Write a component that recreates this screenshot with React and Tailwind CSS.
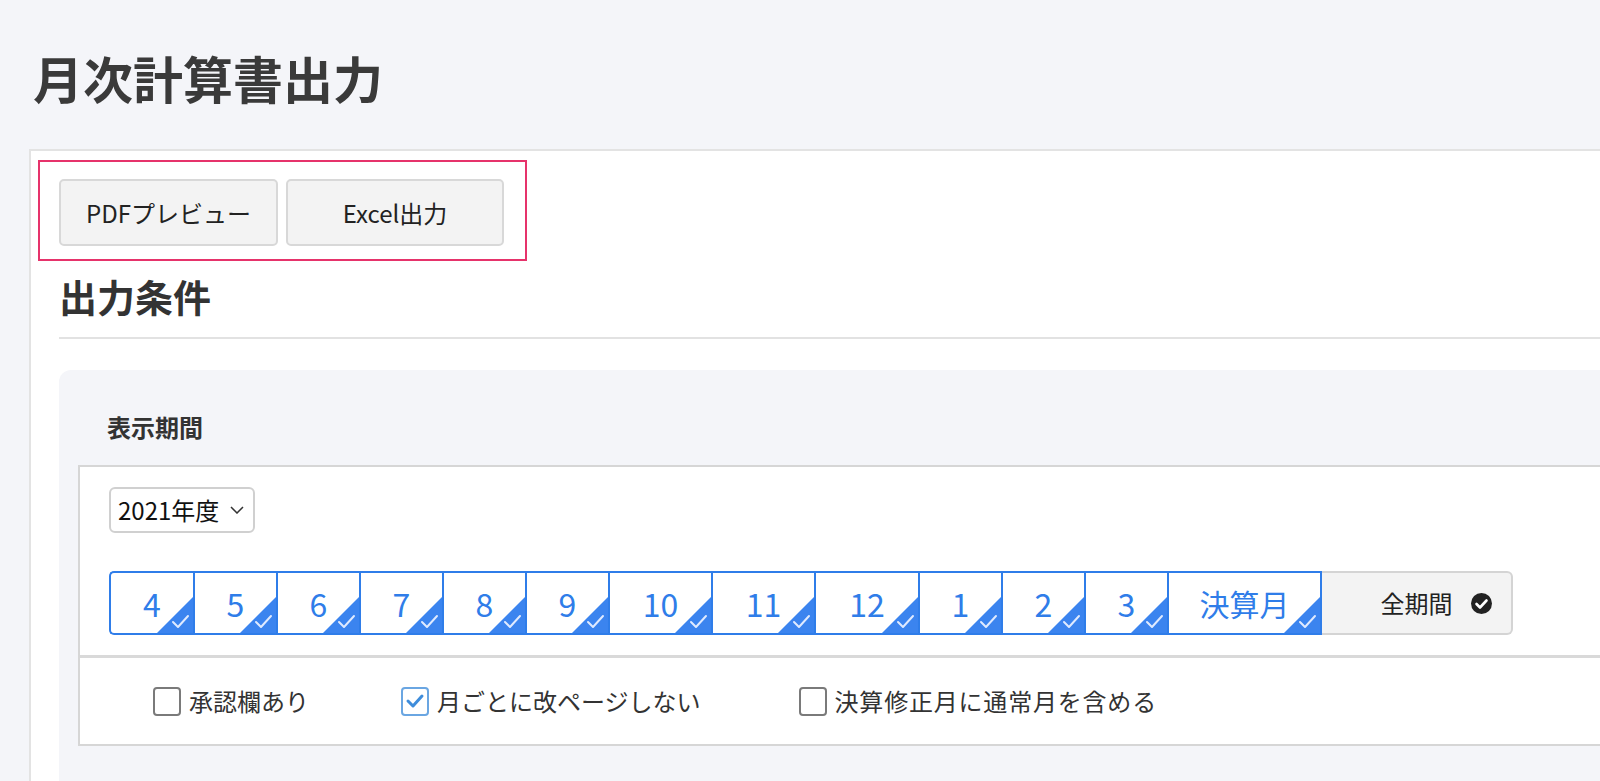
import React from "react";

const months = [
  { label: "4", w: "w-[84px]" },
  { label: "5", w: "w-[83px]" },
  { label: "6", w: "w-[83px]" },
  { label: "7", w: "w-[83px]" },
  { label: "8", w: "w-[83px]" },
  { label: "9", w: "w-[83px]" },
  { label: "10", w: "w-[103px]" },
  { label: "11", w: "w-[103px]" },
  { label: "12", w: "w-[104px]" },
  { label: "1", w: "w-[83px]" },
  { label: "2", w: "w-[83px]" },
  { label: "3", w: "w-[83px]" },
  { label: "決算月", w: "w-[155px]" },
];

function Corner() {
  return (
    <svg className="absolute right-0 bottom-0" width="36" height="36" viewBox="0 0 36 36">
      <polygon points="36,0 36,36 0,36" fill="#3b84ef" />
      <polyline points="16,25 21,30 31,19" fill="none" stroke="#dfeaff" strokeWidth="2" strokeLinecap="round" strokeLinejoin="round" />
    </svg>
  );
}

function Checkbox({ checked }) {
  if (checked) {
    return (
      <span className="flex h-[29px] w-[28px] shrink-0 items-center justify-center rounded-[4px] border-2 border-[#6aa6e2] bg-white">
        <svg width="20" height="16" viewBox="0 0 20 16">
          <polyline points="3,8 8,13 17,3" fill="none" stroke="#3f8ddb" strokeWidth="3" strokeLinecap="round" strokeLinejoin="round" />
        </svg>
      </span>
    );
  }
  return <span className="h-[29px] w-[28px] shrink-0 rounded-[4px] border-2 border-[#7a7a7a] bg-white" />;
}

export default function App() {
  return (
    <div className="flex h-[781px] w-[1600px] flex-col overflow-hidden bg-[#f4f5f9] font-['Noto_Sans_CJK_JP','Noto_Sans',sans-serif] text-[#333]">
      <h1 className="h-[149px] shrink-0 pl-[33px] pt-[46px] text-[50px] leading-[62px] font-bold text-[#3a3a3a]">
        月次計算書出力
      </h1>

      <div className="flex flex-1 flex-col border-t-2 border-l-2 border-[#e3e3e3] bg-white ml-[29px] pl-[7px] pt-[9px]">
        <div className="flex w-fit gap-[8px] border-2 border-[#e6336b] pl-[19px] pr-[21px] pt-[17px] pb-[13px]">
          <button className="flex h-[67px] w-[219px] items-center justify-center rounded-[5px] border-2 border-[#d8d8d8] bg-[#f3f3f3] text-[24px] text-[#222]">
            PDFプレビュー
          </button>
          <button className="flex h-[67px] w-[218px] items-center justify-center rounded-[5px] border-2 border-[#d8d8d8] bg-[#f3f3f3] text-[24px] text-[#222]">
            Excel出力
          </button>
        </div>

        <div className="ml-[21px] flex flex-1 flex-col">
          <h2 className="mt-[11px] text-[38px] leading-[48px] font-bold text-[#333]">出力条件</h2>
          <div className="mt-[17px] h-[2px] bg-[#e2e2e2]" />

          <div className="mt-[31px] flex flex-1 flex-col rounded-tl-[12px] bg-[#f4f5f9] pl-[19px] pt-[42px]">
            <div className="ml-[29px] text-[24px] leading-[30px] font-bold text-[#333]">表示期間</div>

            <div className="mt-[23px] border-y-2 border-l-2 border-[#d6d6d6] bg-white">
              <div className="border-b-[3px] border-[#d9d9d9] pl-[29px] pt-[20px] pb-[20px]">
                <div className="flex h-[46px] w-[146px] items-center justify-between rounded-[6px] border-2 border-[#d0d0d0] bg-white pl-[7px] pr-[9px] text-[24px] text-[#111]">
                  <span>2021年度</span>
                  <svg width="14" height="8" viewBox="0 0 14 8">
                    <polyline points="1,1 7,7 13,1" fill="none" stroke="#333" strokeWidth="1.5" />
                  </svg>
                </div>

                <div className="mt-[38px] flex h-[64px]">
                  {months.map((m, i) => (
                    <div
                      key={m.label}
                      className={
                        "relative flex items-center justify-center border-y-2 border-l-2 border-[#2f7de9] text-[#2f7de9] " +
                        m.w +
                        (i === 0 ? " rounded-l-[5px]" : "") +
                        (i === months.length - 1 ? " border-r-2 text-[30px]" : " text-[32px]")
                      }
                    >
                      <span className="leading-none">{m.label}</span>
                      <Corner />
                    </div>
                  ))}
                  <div className="relative flex w-[191px] items-center justify-center rounded-r-[6px] border-y-2 border-r-2 border-[#d4d4d4] bg-[#f3f3f3] text-[24px] text-[#222]">
                    <span>全期間</span>
                    <svg className="absolute right-[19px]" width="21" height="21" viewBox="0 0 21 21">
                      <circle cx="10.5" cy="10.5" r="10.5" fill="#222" />
                      <polyline points="5.5,11 9,14.5 15.5,7.5" fill="none" stroke="#fff" strokeWidth="2.6" strokeLinecap="round" strokeLinejoin="round" />
                    </svg>
                  </div>
                </div>
              </div>

              <div className="flex h-[86px] items-center pl-[73px] text-[24px] text-[#333]">
                <label className="flex items-center gap-[8px]">
                  <Checkbox />
                  <span>承認欄あり</span>
                </label>
                <label className="ml-[92px] flex items-center gap-[8px]">
                  <Checkbox checked />
                  <span>月ごとに改ページしない</span>
                </label>
                <label className="ml-[98px] flex items-center gap-[8px]">
                  <Checkbox />
                  <span className="tracking-[0.8px]">決算修正月に通常月を含める</span>
                </label>
              </div>
            </div>
          </div>
        </div>
      </div>
    </div>
  );
}
